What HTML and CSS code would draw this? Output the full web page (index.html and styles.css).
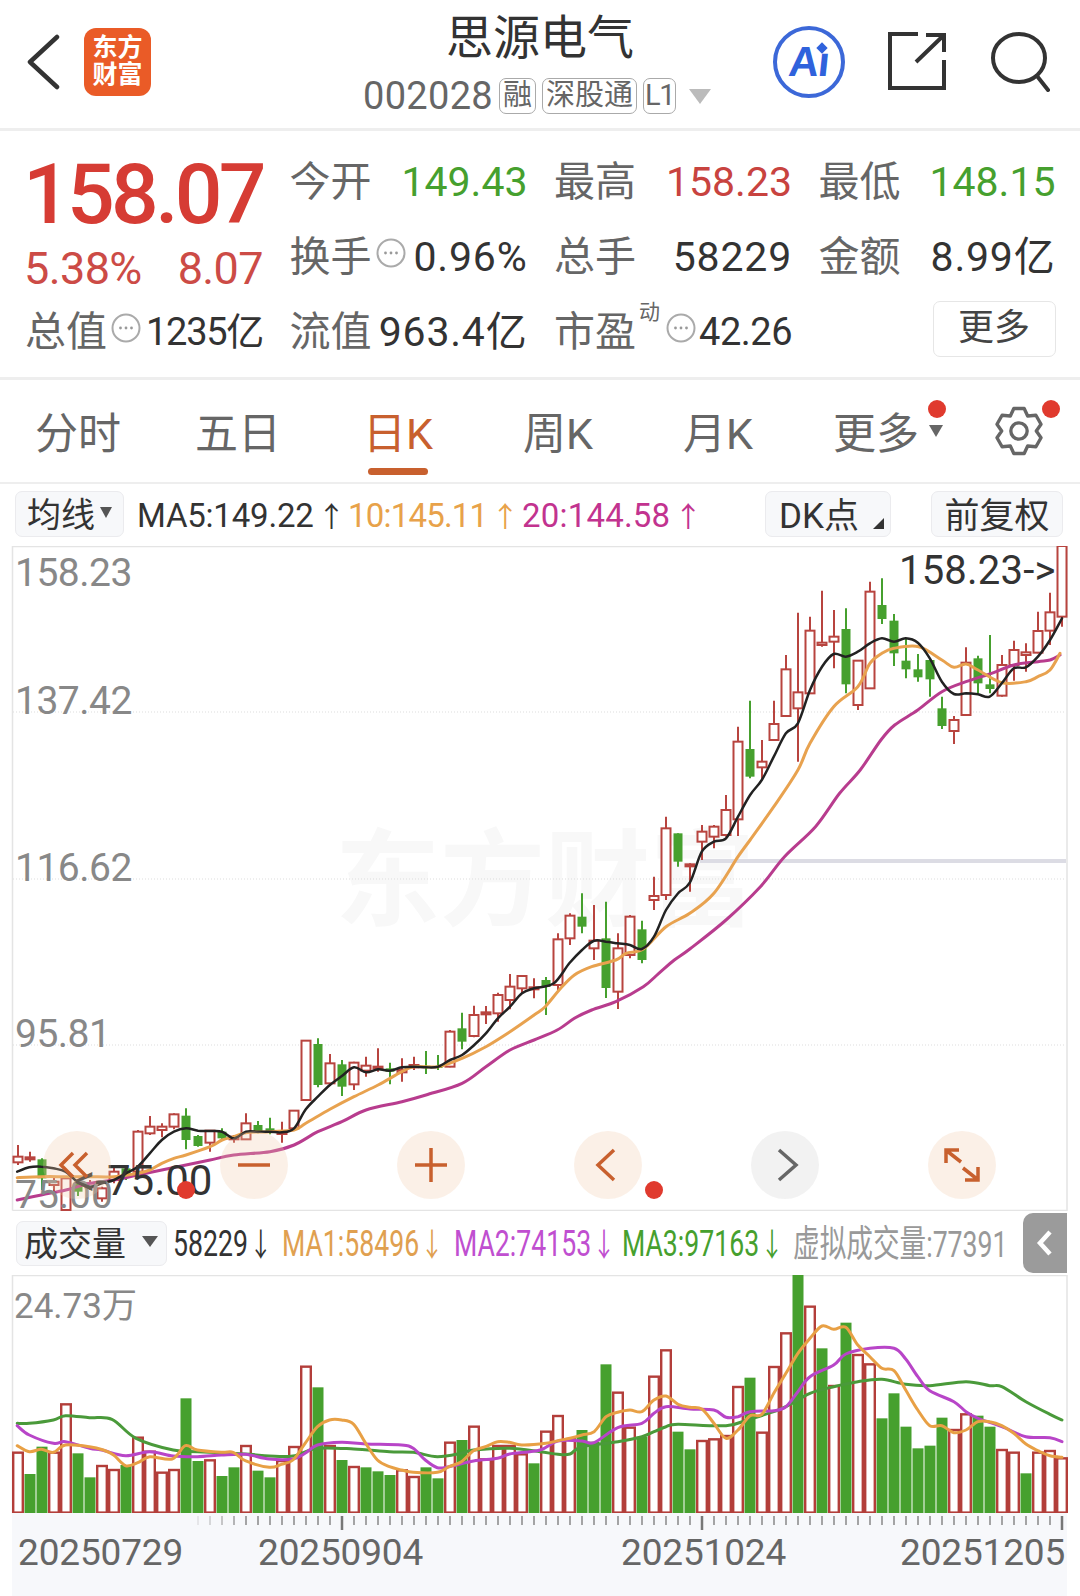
FILE: index.html
```html
<!DOCTYPE html>
<html lang="zh-CN">
<head>
<meta charset="utf-8">
<title>思源电气</title>
<link rel="stylesheet" href="styles.css">
</head>
<body>
<div class="page">
  <header class="top">
    <div class="top-left">
      <svg class="ic-back" viewBox="0 0 34 56"><polyline points="31,3 4,28 31,53"/></svg>
      <div class="logo">东方<br>财富</div>
    </div>
    <div class="stock">
      <div class="title">思源电气</div>
      <div class="sub">
        <span class="code">002028</span>
        <span class="tag">融</span>
        <span class="tag">深股通</span>
        <span class="tag tag-l">L1</span>
        <span class="sub-caret"></span>
      </div>
    </div>
    <div class="top-right">
      <div class="ai"><span class="ai-text">Aı</span><span class="ai-star"></span></div>
      <svg class="ic-share" viewBox="0 0 58 58"><path d="M30 2H2V56H56V28"/><path d="M28 30L56 3M38 3H56V20"/></svg>
      <svg class="ic-search" viewBox="0 0 60 60"><ellipse cx="29" cy="26" rx="26" ry="24"/><path d="M47 44L58 58"/></svg>
    </div>
  </header>

  <section class="quote">
    <div class="price-block">
      <div class="price">158.07</div>
      <div class="change"><span>5.38%</span><span>8.07</span></div>
    </div>
    <div class="cell"><span class="lb">今开</span><span class="val down">149.43</span></div>
    <div class="cell"><span class="lb">最高</span><span class="val up">158.23</span></div>
    <div class="cell"><span class="lb">最低</span><span class="val down">148.15</span></div>
    <div class="cell cell-tight"><span class="lb">换手</span><svg class="info" viewBox="0 0 30 30"><use href="#info"/></svg><span class="val val-wide push">0.96%</span></div>
    <div class="cell"><span class="lb">总手</span><span class="val val-wide">58229</span></div>
    <div class="cell"><span class="lb">金额</span><span class="val val-wide">8.99亿</span></div>
    <div class="cell cell-tight"><span class="lb">总值</span><svg class="info" viewBox="0 0 30 30"><use href="#info"/></svg><span class="val val-sm val-cap push">1235亿</span></div>
    <div class="cell"><span class="lb">流值</span><span class="val val-wide">963.4亿</span></div>
    <div class="cell cell-tight"><span class="lb">市盈</span><sup class="dyn">动</sup><svg class="info" viewBox="0 0 30 30"><use href="#info"/></svg><span class="val val-sm push">42.26</span></div>
    <div class="cell cell-btn"><span class="more">更多</span></div>
  </section>

  <nav class="tabs">
    <div class="tab">分时</div>
    <div class="tab">五日</div>
    <div class="tab active">日K</div>
    <div class="tab">周K</div>
    <div class="tab">月K</div>
    <div class="tab tab-more">更多<span class="tab-caret"></span><span class="dot dot-more"></span></div>
    <div class="gear">
      <svg viewBox="-26 -27 52 54"><path d="M-5.4 -23.4L5.4 -23.4L9 -15.6L17.6 -16.4L22.9 -7L18 0L22.9 7L17.6 16.4L9 15.6L5.4 23.4L-5.4 23.4L-9 15.6L-17.6 16.4L-22.9 7L-18 0L-22.9 -7L-17.6 -16.4L-9 -15.6Z"/><circle r="8.5"/></svg>
      <span class="dot dot-gear"></span>
    </div>
  </nav>

  <div class="ma-row">
    <div class="select sel-ma">均线<span class="caret"></span></div>
    <span class="ma ma-5">MA5:149.22<i>↑</i></span>
    <span class="ma ma-10">10:145.11<i>↑</i></span>
    <span class="ma ma-20">20:144.58<i>↑</i></span>
    <div class="select sel-dk">DK点<span class="corner"></span></div>
    <div class="select sel-fq">前复权</div>
  </div>

  <div class="plot">
    <div class="wm">东方财富</div>
    <svg class="plot-svg" id="kline" viewBox="0 546 1080 665" width="1080" height="665"></svg>
    <span class="ax ax1">158.23</span>
    <span class="ax ax2">137.42</span>
    <span class="ax ax3">116.62</span>
    <span class="ax ax4">95.81</span>
    <span class="ax ax5">75.00</span>
    <span class="mark mark-hi">158.23-&gt;</span>
    <span class="mark mark-lo">&lt;-75.00</span>
    <div class="nav">
      <div class="nb"><svg viewBox="0 0 68 68"><path d="M30 22L18 34L30 46M44 22L32 34L44 46"/></svg></div>
      <div class="nb"><svg viewBox="0 0 68 68"><path d="M18 34H50"/></svg></div>
      <div class="nb"><svg viewBox="0 0 68 68"><path d="M18 34H50M34 17V51"/></svg></div>
      <div class="nb"><svg viewBox="0 0 68 68"><path d="M40 19L24 34L40 49"/></svg></div>
      <div class="nb nb-off"><svg viewBox="0 0 68 68"><path d="M28 19L45 34L28 49"/></svg></div>
      <div class="nb"><svg viewBox="0 0 68 68"><path d="M18 32V19H31M19 20L33 31M50 36V49H37M49 48L35 37"/></svg></div>
    </div>
    <span class="dot nav-dot nd1"></span>
    <span class="dot nav-dot nd2"></span>
  </div>

  <div class="vol-row">
    <div class="select sel-vol">成交量<span class="caret caret-lg"></span></div>
    <span class="vi vi-a"><span class="sq">58229<i>↓</i></span></span>
    <span class="vi vi-b"><span class="sq">MA1:58496<i>↓</i></span></span>
    <span class="vi vi-c"><span class="sq">MA2:74153<i>↓</i></span></span>
    <span class="vi vi-d"><span class="sq">MA3:97163<i>↓</i></span></span>
    <span class="vi vi-e"><span class="sq">虚拟成交量:77391</span></span>
    <div class="fold"><svg viewBox="0 0 20 32"><path d="M15 5L5 16L15 27"/></svg></div>
  </div>

  <div class="vol-plot">
    <svg class="plot-svg" id="vol" viewBox="0 1275 1080 238" width="1080" height="238"></svg>
    <span class="vol-max">24.73万</span>
  </div>

  <div class="axis">
    <svg class="ticks" id="ticks" viewBox="0 1513 1080 20" width="1080" height="20"></svg>
    <div class="dates">
      <span>20250729</span>
      <span>20250904</span>
      <span>20251024</span>
      <span>20251205</span>
    </div>
  </div>
</div>

<svg class="defs" width="0" height="0">
  <symbol id="info" viewBox="0 0 30 30">
    <circle cx="15" cy="15" r="13.5" fill="#fff" stroke="#aaa" stroke-width="2"/>
    <circle cx="9.5" cy="15" r="1.4" fill="#999"/><circle cx="15" cy="15" r="1.4" fill="#999"/><circle cx="20.5" cy="15" r="1.4" fill="#999"/>
  </symbol>
</svg>
<script src="chart.js"></script>
</body>
</html>
```

FILE: styles.css
```css
* { box-sizing: border-box; }
html, body { margin: 0; padding: 0; background: #fff; }
body { font-family: Roboto, "Noto Sans CJK SC", sans-serif; color: #333; }
.page { width: 1080px; height: 1596px; overflow: hidden; position: relative; }
.defs { position: absolute; }
i { font-style: normal; }

/* top bar */
.top { height: 131px; border-bottom: 3px solid #eee; display: grid; grid-template-columns: 1fr auto 1fr; }
.top-left { display: flex; align-items: flex-start; padding: 34px 0 0 26px; }
.ic-back { width: 34px; height: 56px; fill: none; stroke: #333; stroke-width: 4.5; stroke-linejoin: round; stroke-linecap: round; }
.logo { width: 67px; height: 68px; margin: -6px 0 0 24px; background: #ea5b27; border-radius: 12px; color: #fff; font-weight: 700; font-size: 25px; line-height: 27px; text-align: center; padding-top: 6px; }
.stock { display: flex; flex-direction: column; align-items: center; padding-top: 12px; }
.title { font-size: 47px; line-height: 52px; color: #333; }
.sub { display: flex; align-items: center; gap: 6px; margin: 14px 0 0 -6px; height: 36px; }
.code { font-size: 38px; color: #666; letter-spacing: 0.3px; }
.tag { height: 36px; border: 1.5px solid #aaa; border-radius: 7px; font-size: 29px; line-height: 33px; color: #666; padding: 0 3px; }
.tag-l { padding: 0 1px; letter-spacing: -1.5px; }
.sub-caret { width: 0; height: 0; border-left: 11px solid transparent; border-right: 11px solid transparent; border-top: 15px solid #bbb; margin-left: 7px; }
.top-right { display: flex; align-items: flex-start; justify-content: flex-end; padding: 26px 30px 0 0; }
.ai { width: 72px; height: 72px; border: 4px solid #3c68d8; border-radius: 50%; display: flex; align-items: center; justify-content: center; position: relative; }
.ai-text { display: inline-block; font-family: "Liberation Sans", sans-serif; font-weight: 700; font-size: 42px; color: #2f62dc; letter-spacing: -1px; transform: skewX(-6deg); }
.ai-star { position: absolute; width: 8px; height: 8px; background: #2f62dc; transform: rotate(45deg); top: 14px; right: 15px; }
.ic-share { width: 58px; height: 58px; margin: 6px 0 0 43px; fill: none; stroke: #333; stroke-width: 4; }
.ic-search { width: 60px; height: 60px; margin: 6px 0 0 44px; fill: none; stroke: #333; stroke-width: 4; stroke-linecap: round; }

/* quote */
.quote { height: 249px; border-bottom: 3px solid #eee; padding: 13px 0 0 25px; display: grid; grid-template-columns: 238px 238px 238px 237px; grid-template-rows: 75px 75px 75px; column-gap: 26.5px; }
.price-block { grid-row: 1 / 3; display: flex; flex-direction: column; }
.price { font-size: 84px; line-height: 72px; margin: 15px 0 0 -2px; font-weight: 500; color: #d63c34; letter-spacing: -3.7px; }
.change { display: flex; justify-content: space-between; margin: 13px 0 0 -1px; font-size: 45px; line-height: 50px; color: #cc4b46; }
.change span { letter-spacing: -0.6px; }
.cell { display: flex; align-items: center; justify-content: space-between; white-space: nowrap; }
.cell-tight { justify-content: flex-start; position: relative; }
.lb { font-size: 41px; line-height: 48px; color: #666; }
.val { font-size: 41px; line-height: 48px; color: #333; }
.val-wide { letter-spacing: 0.8px; }
.val-sm { font-size: 38px; letter-spacing: -0.5px; }
.val-cap { letter-spacing: -1.3px; }
.val.up { color: #c8433f; }
.val.down { color: #46a02e; }
.val.push { margin-left: auto; }
.info { width: 30px; height: 30px; flex: none; margin: -8px 0 0 4px; }
.dyn { font-size: 21px; line-height: 21px; color: #666; margin: -38px 2px 0 3px; }
.cell-btn { justify-content: flex-end; padding-bottom: 5px; }
.more { width: 123px; height: 56px; border: 1.5px solid #e6e6e6; border-radius: 7px; font-size: 36px; line-height: 52px; text-align: center; color: #444; }

/* tabs */
.tabs { height: 104px; border-bottom: 2px solid #eee; display: grid; grid-template-columns: repeat(6, 160px) 1fr; margin-left: -2px; align-items: center; }
.tab { position: relative; font-size: 43px; line-height: 50px; color: #666; text-align: center; margin-top: 5px; }
.tab.active { color: #c8602e; }
.tab.active::after { content: ""; position: absolute; left: 50px; right: 50px; top: 59.5px; height: 7px; border-radius: 4px; background: #c8602e; }
.tab-more { display: flex; justify-content: center; align-items: center; padding-left: 20px; }
.tab-caret { width: 0; height: 0; border-left: 7px solid transparent; border-right: 7px solid transparent; border-top: 12px solid #666; margin: -5px 0 0 10px; }
.dot { width: 18px; height: 18px; border-radius: 50%; background: #e03a2e; position: absolute; display: block; }
.dot-more { left: 130px; top: -8.5px; }
.gear { position: relative; width: 50px; height: 52px; margin: 0 0 0 36px; }
.gear svg { width: 50px; height: 52px; fill: none; stroke: #666; stroke-width: 3.5; stroke-linejoin: round; display: block; }
.dot-gear { right: -16px; top: -5px; }

/* MA row */
.ma-row { height: 62px; display: flex; align-items: center; padding-left: 15px; padding-bottom: 2px; }
.select { height: 46px; background: #f7f8fa; border: 1.5px solid #ebebee; border-radius: 7px; display: flex; align-items: center; color: #333; white-space: nowrap; position: relative; padding-bottom: 3px; }
.sel-ma { width: 109px; padding-left: 11px; font-size: 34px; }
.caret { width: 0; height: 0; border-left: 6.5px solid transparent; border-right: 6.5px solid transparent; border-top: 11px solid #555; margin-left: 5px; }
.ma { font-size: 33px; line-height: 40px; white-space: nowrap; letter-spacing: -0.2px; padding-top: 5px; }
.ma i { margin-left: 4px; font-size: 28px; }
.ma-5 { width: 211px; margin-left: 13px; color: #333; }
.ma-10 { width: 174px; color: #e8a24a; letter-spacing: -0.8px; }
.ma-20 { width: 243px; color: #c2338f; letter-spacing: 0.2px; }
.sel-dk { width: 126px; padding-left: 13px; font-size: 35px; }
.corner { position: absolute; right: 6px; bottom: 7px; width: 0; height: 0; border-left: 11px solid transparent; border-bottom: 11px solid #333; }
.sel-fq { width: 132px; margin-left: 40px; justify-content: center; font-size: 35px; }

/* chart */
.plot { position: relative; height: 665px; }
.plot-svg { position: absolute; left: 0; top: 0; display: block; }
.wm { position: absolute; left: 335px; top: 276px; font-size: 105px; line-height: 120px; color: #f8f8f8; font-weight: 700; white-space: nowrap; }
.ax { position: absolute; left: 15px; font-size: 39px; line-height: 44px; color: #888; letter-spacing: -0.5px; }
.ax1 { top: 5px; }
.ax2 { top: 133px; }
.ax3 { top: 300px; }
.ax4 { top: 466px; }
.ax5 { top: 627px; letter-spacing: 0; }
.mark { position: absolute; line-height: 44px; color: #333; white-space: nowrap; }
.mark-hi { left: 899px; top: 3px; font-size: 40px; letter-spacing: 0.2px; }
.mark-lo { left: 74px; top: 613px; font-size: 42px; }
.nav { position: absolute; left: 42.5px; top: 585px; display: flex; gap: 109px; }
.nb { width: 68px; height: 68px; border-radius: 50%; background: rgba(240, 200, 170, 0.28); flex: none; }
.nb svg { display: block; width: 68px; height: 68px; fill: none; stroke: #c8602e; stroke-width: 3.5; }
.nb-off { background: rgba(150, 150, 150, 0.12); }
.nb-off svg { stroke: #666; }
.nd1 { left: 177px; top: 635px; }
.nd2 { left: 645px; top: 635px; }

/* chart svg shapes */
.grid { stroke: #ddd; stroke-width: 1; stroke-dasharray: 1 2; }
.frame { fill: none; stroke: #e4e4e4; stroke-width: 1.5; }
.guide { stroke: #dcdce4; stroke-width: 4; }
.wick-r { stroke: #b8443f; stroke-width: 2; }
.wick-g { stroke: #46a02e; stroke-width: 2; }
.body-r { fill: #fff; stroke: #b8443f; stroke-width: 2; }
.body-g { fill: #46a02e; }
.vbar-r { fill: #fff; stroke: #b33e3a; stroke-width: 2.4; }
.vbar-g { fill: #46a02e; }
.line { fill: none; stroke-linejoin: round; stroke-linecap: round; }
.l-k5 { stroke: #222; stroke-width: 2.5; }
.l-k10 { stroke: #e8a24f; stroke-width: 3; }
.l-k20 { stroke: #b83c8e; stroke-width: 3; }
.l-v1 { stroke: #e8a045; stroke-width: 3; }
.l-v2 { stroke: #b845c8; stroke-width: 3; }
.l-v3 { stroke: #4a9a3a; stroke-width: 3; }
.tick { stroke: #888; stroke-width: 1.5; }
.tick-maj { stroke: #777; stroke-width: 2.5; }

/* volume row */
.vol-row { height: 64px; display: flex; align-items: center; padding-left: 16px; position: relative; }
.sel-vol { width: 151px; height: 45px; padding-left: 7px; font-size: 34px; }
.caret-lg { border-left-width: 8px; border-right-width: 8px; border-top-width: 11px; margin-left: 16px; }
.vi { display: block; font-size: 37px; line-height: 44px; white-space: nowrap; flex: none; padding-top: 3px; }
.sq { display: inline-block; transform: scaleX(0.72); transform-origin: 0 50%; }
.sq i { margin-left: 2px; font-size: 32px; }
.vi-a { width: 109px; margin-left: 6px; color: #333; }
.vi-b { width: 172px; color: #e0a050; }
.vi-c { width: 168px; color: #c04fd0; }
.vi-d { width: 171px; color: #46a02e; }
.vi-e { width: 207px; color: #999; }
.fold { position: absolute; left: 1023px; top: 2px; width: 44px; height: 60px; background: #9b9b9b; border-radius: 10px 0 0 10px; display: flex; align-items: center; justify-content: center; }
.fold svg { width: 20px; height: 32px; fill: none; stroke: #fff; stroke-width: 4.5; }

/* volume plot */
.vol-plot { position: relative; height: 238px; }
.vol-max { position: absolute; left: 14px; top: 10px; font-size: 35px; line-height: 44px; color: #888; }

/* date axis */
.axis { margin-left: 12px; width: 1055px; height: 83px; background: #f7f8fb; position: relative; }
.ticks { position: absolute; left: -12px; top: 0; display: block; }
.dates { display: grid; grid-template-columns: 240px 363px 279px auto; padding: 18px 0 0 6px; font-size: 37px; line-height: 44px; color: #666; letter-spacing: -0.15px; }
```

FILE: chart.js
```js
// Daily candles and volume for the chart, read as [colour, high, bodyTop, bodyBottom, low].
var early = [
  "R 585 620 637 645","R 605 622 628 635","G 625 628 685 720","R 680 695 705 730","R 680 685 780 782",
  "G 690 700 725 738","R 690 700 712 720","R 710 715 745 755","R 650 665 690 700","G 645 655 680 690",
  "R 540 545 665 670","R 498 530 550 555","R 520 530 540 562","R 490 493 530 538","G 475 497 570 598",
  "G 555 558 588 590","R 540 542 578 605","G 535 545 565 570","R 555 560 568 578","R 490 520 568 570",
  "G 513 525 545 550","G 503 535 545 553","R 515 545 552 578","R 480 482 535 540","R 270 272 450 452",
  "G 265 282 405 412","R 312 340 400 405","G 330 343 410 438","R 335 338 403 420","R 320 347 362 380",
  "R 295 350 355 365","G 338 355 365 403","R 325 360 367 395","R 320 345 352 360","G 303 347 353 372",
  "G 315 348 352 360","R 240 245 350 352","G 188 235 275 298","R 167 195 258 262","R 168 187 193 222",
  "R 128 135 190 215","R 72 110 150 178","R 75 78 115 130","R 85 112 118 145"
];
var late = [
  "G 1281 1290 1311 1395","R 1150 1168 1305 1320","R 1090 1097 1165 1185","G 1030 1100 1130 1150","R 1065 1172 1195 1230",
  "G 1055 1165 1314 1344","R 1150 1195 1325 1377","R 1095 1100 1215 1225","G 1112 1138 1230 1240","R 980 1038 1050 1080",
  "R 800 835 1035 1050","G 850 850 935 950","R 940 943 948 1025","R 825 845 875 930","R 825 830 860 895",
  "R 735 780 855 860","R 530 575 808 858","G 452 597 680 685","R 570 635 652 690","R 452 522 570 572",
  "R 315 358 498 500","R 188 427 475 635","R 200 242 430 432","R 122 278 285 290","R 180 260 275 355",
  "G 175 237 403 430","R 330 332 465 480","R 95 125 415 417","G 85 165 207 222","G 192 212 310 348",
  "G 265 332 358 385","G 312 358 382 395","G 330 330 388 440","G 440 475 528 537","R 498 510 543 582",
  "R 292 338 495 497","G 317 325 400 430","G 255 403 417 430","R 315 345 437 440","R 272 300 345 392",
  "R 280 307 315 365","R 185 243 308 310","R 128 187 242 285","R 200 -12 200 230"
];
var vols =
  "R545 G612 G530 R545 R400 G550 G622 R585 R597 G585 R500 R542 R605 R597 G385 G573 R568 G618 G592 R525 G602 G622 " +
  "R570 R528 R287 G352 R525 G570 R588 G592 G604 G615 R598 R618 G592 G625 R515 G510 R467 R565 R525 R525 R550 G580 " +
  "R482 R435 R505 G480 G515 G283 R365 R470 G500 R317 R238 G485 G538 R510 R505 R495 R348 G323 R485 R288 R187 G14 " +
  "R107 G235 R345 G158 R252 R280 G445 G370 G470 G535 G527 G443 R477 R430 G437 G470 R537 R545 G610 R545 R540 R562";

// Moving averages, as [x, y] points in two pieces of the chart: left (y from 950) and right (x from 540, y from 550).
function L(p) { return p.map(function (a) { return [a[0] / 2.904, 950 + a[1] / 3]; }); }
function Rt(p) { return p.map(function (a) { return [540 + a[0] / 2.904, 550 + a[1] / 3]; }); }
function Rb(p) { return p.map(function (a) { return [540 + a[0] / 2.904, 950 + a[1] / 3]; }); }
function VL(p) { return p.map(function (a) { return [a[0] / 2.904, 1270 + a[1] / 3]; }); }
function VR(p) { return p.map(function (a) { return [540 + a[0] / 2.904, 1270 + a[1] / 3]; }); }

var k5 = L([[50,665],[85,652],[120,650],[155,655],[190,665],[225,695],[261,710],[296,700],[331,690],[366,670],[400,650],[435,610],[470,570],[505,545],[540,535],[575,542],[610,543],[645,545],[679,565],[714,545],[749,545],[784,545],[819,547],[854,535],[888,478],[923,440],[958,405],[993,378],[1028,352],[1063,367],[1098,358],[1132,362],[1167,352],[1202,350],[1237,352],[1272,350],[1307,330],[1342,315],[1377,285],[1411,250],[1446,205],[1481,170],[1516,130],[1551,115]])
  .concat(Rb([[40,100],[85,40]]))
  .concat(Rt([[122,1200],[157,1172],[192,1175],[226,1180],[261,1185],[296,1197],[331,1160],[366,1080],[401,1030],[435,998],[470,905],[505,875],[540,865],[575,800],[610,735],[644,690],[679,620],[714,550],[749,520],[784,420],[819,350],[853,312],[888,320],[923,305],[958,280],[993,265],[1028,275],[1062,265],[1097,278],[1132,325],[1167,395],[1202,432],[1237,430],[1272,433],[1306,440],[1341,400],[1376,355],[1411,352],[1446,320],[1481,270],[1516,205]]));
var k10 = L([[50,683],[120,680],[191,680],[261,680],[331,680],[400,670],[435,660],[470,640],[505,625],[540,615],[610,590],[645,570],[679,560],[714,548],[784,545],[854,540],[888,520],[958,478],[1028,440],[1098,405],[1167,365],[1202,350],[1272,350],[1342,325],[1411,290],[1481,245],[1551,195]])
  .concat(Rb([[15,170],[60,115],[100,75],[150,50],[220,30],[250,10]]))
  .concat(Rt([[300,1197],[366,1130],[435,1090],[505,1030],[575,920],[610,870],[679,770],[749,660],[784,580],[853,470],[923,410],[958,340],[993,310],[1028,295],[1100,290],[1167,330],[1202,352],[1237,342],[1272,360],[1341,398],[1411,395],[1446,380],[1481,360],[1510,310]]));
var k20 = L([[50,750],[120,735],[191,720],[261,700],[331,690],[400,675],[470,660],[540,645],[610,630],[679,615],[784,605],[854,585],[923,545],[993,515],[1063,480],[1167,455],[1237,435],[1342,400],[1411,350],[1481,300],[1551,270]])
  .concat(Rb([[50,240],[100,205],[150,180],[220,155],[300,110],[345,70],[390,30]]))
  .concat(Rt([[435,1197],[540,1110],[640,1010],[710,920],[800,830],[870,730],[930,660],[990,570],[1030,525],[1097,480],[1167,425],[1237,395],[1306,372],[1376,345],[1446,335],[1481,330],[1510,315]]));

var v1 = VL([[50,527],[85,545],[120,538],[155,547],[190,525],[260,530],[300,540],[330,555],[365,587],[400,578],[435,560],[500,567],[538,527],[573,540],[643,547],[677,547],[712,572],[782,592],[817,583],[851,570],[886,520],[922,470],[957,450],[992,450],[1027,463],[1062,520],[1096,570],[1131,590],[1166,600],[1200,607],[1270,607],[1304,590],[1340,575],[1375,542],[1410,530],[1445,515],[1480,517],[1515,525]])
  .concat(VR([[17,520],[52,512],[87,505],[122,495],[157,485],[192,440],[226,427],[261,420],[296,425],[331,390],[366,378],[401,403],[435,412],[470,417],[505,460],[540,505],[575,480],[610,437],[644,433],[679,370],[714,310],[749,250],[784,205],[819,168],[853,178],[888,172],[923,225],[958,260],[993,295],[1028,302],[1062,360],[1097,420],[1132,467],[1167,467],[1202,488],[1237,480],[1272,455],[1306,455],[1341,467],[1376,490],[1411,522],[1446,542],[1481,557],[1516,562]]));
var v2 = VL([[50,467],[85,495],[155,520],[190,515],[260,535],[295,540],[365,557],[435,545],[503,558],[573,560],[643,555],[712,553],[782,567],[851,567],[886,550],[922,525],[992,517],[1062,522],[1166,525],[1200,535],[1235,570],[1270,593],[1304,590],[1375,573],[1445,565],[1480,552]])
  .concat(VR([[0,540],[52,513],[122,513],[157,518],[226,473],[296,460],[331,430],[366,410],[435,417],[505,420],[540,442],[575,440],[610,425],[679,422],[714,410],[749,365],[784,320],[853,285],[888,252],[958,235],[1028,235],[1062,267],[1097,320],[1132,362],[1202,395],[1237,425],[1272,445],[1341,470],[1411,500],[1481,503],[1516,515]]));
var v3 = VL([[50,460],[85,460],[155,450],[190,437],[260,443],[325,448],[395,505],[503,540],[573,545],[712,552],[782,558],[851,558],[922,535],[1027,537],[1131,545],[1200,547],[1270,560],[1340,550],[1375,540],[1480,535]])
  .concat(VR([[0,545],[52,553],[87,552],[122,530],[226,515],[296,500],[331,485],[366,470],[401,463],[540,467],[610,447],[679,425],[714,410],[784,370],[853,350],[923,335],[993,328],[1062,343],[1132,347],[1237,335],[1306,347],[1341,350],[1411,395],[1481,433],[1516,450]]));

function X(i) { return 18 + 12 * i; }

function smooth(p) {
  var d = "M" + p[0][0].toFixed(1) + " " + p[0][1].toFixed(1);
  for (var i = 0; i < p.length - 1; i++) {
    var a = p[Math.max(i - 1, 0)], b = p[i], c = p[i + 1], e = p[Math.min(i + 2, p.length - 1)];
    d += "C" + (b[0] + (c[0] - a[0]) / 6).toFixed(1) + " " + (b[1] + (c[1] - a[1]) / 6).toFixed(1) + " " +
         (c[0] - (e[0] - b[0]) / 6).toFixed(1) + " " + (c[1] - (e[1] - b[1]) / 6).toFixed(1) + " " +
         c[0].toFixed(1) + " " + c[1].toFixed(1);
  }
  return d;
}
function line(cls, pts) { return '<path class="line ' + cls + '" d="' + smooth(pts) + '"/>'; }

function candle(i, row, toY) {
  var f = row.split(" "), g = f[0] === "G", x = X(i);
  var hi = toY(+f[1]), top = toY(+f[2]), bot = toY(+f[3]), lo = toY(+f[4]);
  var s = '<line class="' + (g ? "wick-g" : "wick-r") + '" x1="' + x + '" x2="' + x + '" y1="' + hi + '" y2="' + lo + '"/>';
  if (g) {
    s += '<rect class="body-g" x="' + (x - 4.5) + '" y="' + top + '" width="9" height="' + Math.max(bot - top, 2) + '"/>';
  } else {
    s += '<rect class="body-r" x="' + (x - 4.5) + '" y="' + top + '" width="9" height="' + Math.max(bot - top, 2) + '"/>';
  }
  return s;
}

var h = '';
[712, 879, 1045].forEach(function (y) { h += '<line class="grid" x1="13" x2="1066" y1="' + y + '" y2="' + y + '"/>'; });
h += '<path class="frame" d="M12.5 1210.5V546.5H1067V1210.5H12.5"/>';
h += '<line class="guide" x1="700" x2="1066" y1="861" y2="861"/>';
early.forEach(function (r, i) { h += candle(i, r, function (z) { return 950 + z / 3; }); });
late.forEach(function (r, i) { h += candle(i + 44, r, function (z) { return 550 + z / 3; }); });
h += line("l-k20", k20) + line("l-k10", k10) + line("l-k5", k5);
document.getElementById("kline").innerHTML = h;

var v = '<path class="frame" d="M12.5 1513V1275.5H1067V1513"/>';
vols.split(" ").forEach(function (t, i) {
  var top = 1270 + (+t.slice(1)) / 3, x = X(i);
  if (t[0] === "G") {
    v += '<rect class="vbar-g" x="' + (x - 5.5) + '" y="' + top + '" width="11" height="' + (1513 - top) + '"/>';
  } else {
    v += '<rect class="vbar-r" x="' + (x - 4.8) + '" y="' + (top + 1) + '" width="9.6" height="' + (1511.6 - top) + '"/>';
  }
});
v += line("l-v3", v3) + line("l-v2", v2) + line("l-v1", v1);
document.getElementById("vol").innerHTML = v;

var t = '';
for (var i = 15; i < 88; i++) {
  var major = i === 27 || i === 57 || i === 87;
  t += '<line class="' + (major ? "tick-maj" : "tick") + '" x1="' + X(i) + '" x2="' + X(i) + '" y1="1516" y2="' + (major ? 1530 : 1525) + '"' +
       (i < 19 ? ' opacity="' + (i - 14) * 0.2 + '"' : '') + '/>';
}
document.getElementById("ticks").innerHTML = t;
```
